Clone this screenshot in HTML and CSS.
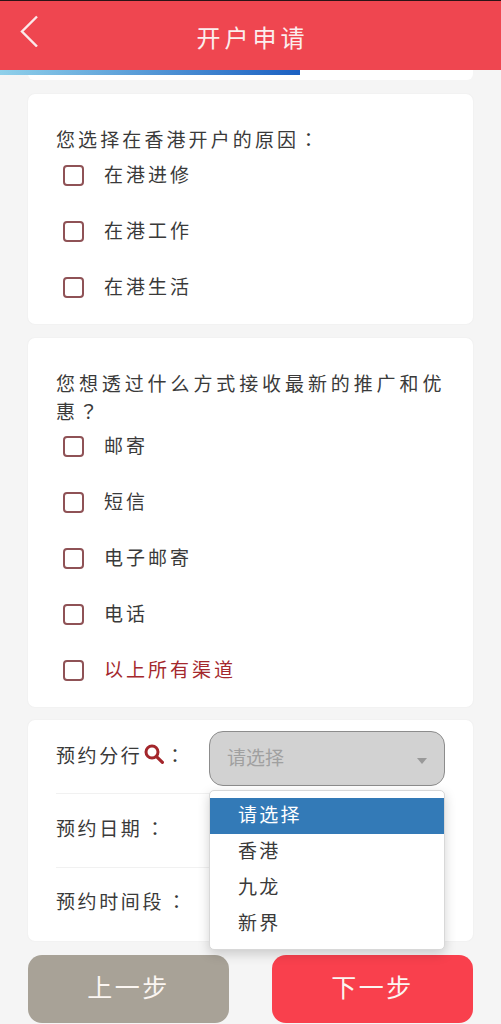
FILE: index.html
```html
<!DOCTYPE html>
<html lang="zh-CN">
<head>
<meta charset="utf-8">
<title>开户申请</title>
<link rel="stylesheet" href="styles.css">
</head>
<body>
<header class="topbar">
  <svg class="back" viewBox="0 0 20 32" width="20" height="32"><path d="M18 1.5 3 16.5l15 15" fill="none" stroke="#fbe9ea" stroke-width="2.4"/></svg>
  <h1 class="title">开户申请</h1>
</header>
<div class="progress-wrap">
  <div class="progress"></div>
  <div class="stub"></div>
</div>
<main class="content">
  <section class="card card-a">
    <p class="question">您选择在香港开户的原因<span class="punct" lang="zh-TW">：</span></p>
    <ul class="options">
      <li class="option"><span class="box"></span><span class="opt-text">在港进修</span></li>
      <li class="option"><span class="box"></span><span class="opt-text">在港工作</span></li>
      <li class="option"><span class="box"></span><span class="opt-text">在港生活</span></li>
    </ul>
  </section>
  <section class="card card-b">
    <p class="question">您想透过什么方式接收最新的推广和优惠<span class="punct" lang="zh-TW">？</span></p>
    <ul class="options">
      <li class="option"><span class="box"></span><span class="opt-text">邮寄</span></li>
      <li class="option"><span class="box"></span><span class="opt-text">短信</span></li>
      <li class="option"><span class="box"></span><span class="opt-text">电子邮寄</span></li>
      <li class="option"><span class="box"></span><span class="opt-text">电话</span></li>
      <li class="option option-all"><span class="box"></span><span class="opt-text">以上所有渠道</span></li>
    </ul>
  </section>
  <section class="card card-c">
    <div class="form-row form-row-first">
      <div class="label">预约分行<svg class="search" viewBox="0 0 20 20" width="20" height="20"><circle cx="8" cy="8" r="6" fill="none" stroke="#a3262b" stroke-width="3"/><path d="m12.8 12.8 5.6 5.6" stroke="#a3262b" stroke-width="3.2" stroke-linecap="round"/></svg><span class="punct colon" lang="zh-TW">：</span></div>
      <div class="select"><span class="placeholder">请选择</span><i class="caret"></i></div>
    </div>
    <div class="form-row form-row-mid">
      <div class="label">预约日期<span class="punct colon" lang="zh-TW">：</span></div>
      <div class="select select-hidden"></div>
    </div>
    <div class="form-row form-row-last">
      <div class="label">预约时间段<span class="punct colon" lang="zh-TW">：</span></div>
      <div class="select select-hidden"></div>
    </div>
    <ul class="dropdown">
      <li class="dropdown-item active"><span>请选择</span></li>
      <li class="dropdown-item"><span>香港</span></li>
      <li class="dropdown-item"><span>九龙</span></li>
      <li class="dropdown-item"><span>新界</span></li>
    </ul>
  </section>
  <div class="actions">
    <button class="btn btn-prev" type="button">上一步</button>
    <button class="btn btn-next" type="button">下一步</button>
  </div>
</main>
</body>
</html>
```

FILE: styles.css
```css
* { box-sizing: border-box; }
html, body { margin: 0; padding: 0; height: 1024px; overflow: hidden; }
body {
  background: #f5f5f5;
  color: #3a3a3a;
  font-family: "Noto Sans CJK SC", "Noto Sans", sans-serif;
  font-size: 19px;
}
.punct { font-family: "Noto Sans CJK TC", sans-serif; }
.topbar {
  height: 70px;
  background: #ef4650;
  border-top: 1px solid #2a1416;
  display: flex;
  align-items: center;
  justify-content: center;
  position: relative;
}
.back { position: absolute; left: 19px; top: 14px; }
.title {
  margin: 0;
  color: #fbeeee;
  font-size: 24px;
  font-weight: 400;
  letter-spacing: 4px;
  line-height: 1;
  padding-left: 4px;
  position: relative;
  top: 1px;
}
.progress-wrap { position: relative; padding: 0 28px; }
.progress {
  position: absolute;
  left: 0;
  top: 0;
  width: 300px;
  height: 5px;
  background: linear-gradient(90deg, #8fd0ea, #1b60c2);
}
.stub { height: 10px; background: #fff; border-radius: 0 0 6px 6px; }
.content { padding: 14px 28px 0; }
.card {
  background: #fff;
  border-radius: 7px;
  box-shadow: 0 0 2px rgba(0,0,0,.06);
  margin-bottom: 14px;
}
.card-a { height: 230px; padding: 31px 28px 0; }
.card-b { height: 369px; padding: 31px 20px 0 28px; margin-bottom: 13px; }
.question {
  margin: 0;
  line-height: 28px;
}
.card-a .question { letter-spacing: 3.1px; }
.card-b .question { letter-spacing: 3.9px; }
.card-a .options { margin-top: 2px; }
.card-b .options { margin-top: 1px; }
.options { list-style: none; margin: 0; padding: 0 0 0 7px; }
.option {
  display: flex;
  align-items: center;
  height: 40px;
  margin-bottom: 16px;
  letter-spacing: 3px;
}
.option-all { color: #a4282d; }
.opt-text { position: relative; top: -2px; }
.box {
  width: 21px;
  height: 21px;
  border: 2px solid #8f5256;
  border-radius: 4px;
  margin-right: 20px;
  flex: none;
}
.card-c { position: relative; height: 221px; padding: 0 28px; }
.form-row {
  height: 74px;
  display: flex;
  border-bottom: 1px solid #f1f1f1;
}
.form-row-last { border-bottom: 0; height: 73px; }
.label {
  width: 153px;
  height: 33px;
  margin-top: 18px;
  flex: none;
  display: flex;
  align-items: center;
  letter-spacing: 2.6px;
}
.form-row-mid .label { margin-top: 17px; }
.form-row-last .label { margin-top: 16px; }
.search { margin-left: 2px; flex: none; position: relative; top: -1px; }
.form-row-first .colon { margin-left: 1px; }
.form-row-mid .colon, .form-row-last .colon { margin-left: 3px; }
.select {
  width: 236px;
  height: 55px;
  margin-top: 11px;
  flex: none;
  background: #d2d2d2;
  border: 1.5px solid #8c8c8c;
  border-radius: 14px;
  color: #a0a0a0;
  font-size: 19px;
  display: flex;
  align-items: center;
  justify-content: space-between;
  padding: 0 17px;
  position: relative;
}
.placeholder { position: relative; top: -2px; }
.select-hidden { height: 40px; margin-top: 16px; border: 1px solid #a8a8a8; border-radius: 3px; background: #e2e2e2; }
.caret {
  width: 0;
  height: 0;
  border-left: 5.5px solid transparent;
  border-right: 5.5px solid transparent;
  border-top: 6px solid #999;
  position: relative;
  top: 2px;
}
.dropdown {
  list-style: none;
  margin: 0;
  padding: 7px 0 8px;
  position: absolute;
  left: 181px;
  top: 70px;
  width: 236px;
  height: 160px;
  background: #fff;
  border: 1px solid #d8d8d8;
  border-radius: 5px;
  box-shadow: 0 4px 12px rgba(0,0,0,.18);
}
.dropdown-item {
  height: 36px;
  line-height: 32px;
  padding-left: 28px;
  letter-spacing: 2.2px;
  color: #3a3a3a;
}
.dropdown-item.active { background: #337ab7; color: #fff; }
.actions { display: flex; justify-content: space-between; }
.btn {
  width: 201px;
  height: 68px;
  border: 0;
  border-radius: 14px;
  color: #fbf6f2;
  font-family: inherit;
  font-size: 25px;
  letter-spacing: 2.5px;
  padding: 0 0 6px;
}
.btn-prev { background: #a8a297; }
.btn-next { background: #f9404d; }
```
